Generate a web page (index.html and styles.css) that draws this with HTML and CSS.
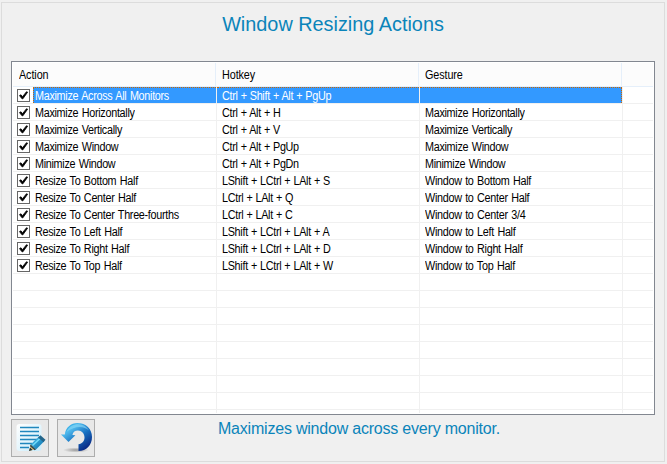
FILE: index.html
```
<!DOCTYPE html>
<html lang="en">
<head>
<meta charset="utf-8">
<title>Window Resizing Actions</title>
<link rel="stylesheet" href="styles.css">
</head>
<body>
<svg width="0" height="0" class="defs"><defs>
<symbol id="check" viewBox="0 0 13 13"><rect x=".5" y=".5" width="12" height="12" fill="#fff" stroke="#666"/><path d="M2.5 6.6 4 5.8 5.5 7.7 9.5 2.7 10.6 3.2 5.9 9.8 5 9.8Z" fill="#000" stroke="#000" stroke-width=".8"/></symbol>
</defs></svg>
<main class="panel">
<h1>Window Resizing Actions</h1>
<section class="list">
<div class="head"><span><b>Action</b></span><span><b>Hotkey</b></span><span><b>Gesture</b></span></div>
<div class="body">
<div class="row selected"><svg><use href="#check"/></svg><span><b>Maximize Across All Monitors</b></span><span><b>Ctrl + Shift + Alt + PgUp</b></span><span></span></div>
<div class="row"><svg><use href="#check"/></svg><span><b>Maximize Horizontally</b></span><span><b>Ctrl + Alt + H</b></span><span><b>Maximize Horizontally</b></span></div>
<div class="row"><svg><use href="#check"/></svg><span><b>Maximize Vertically</b></span><span><b>Ctrl + Alt + V</b></span><span><b>Maximize Vertically</b></span></div>
<div class="row"><svg><use href="#check"/></svg><span><b>Maximize Window</b></span><span><b>Ctrl + Alt + PgUp</b></span><span><b>Maximize Window</b></span></div>
<div class="row"><svg><use href="#check"/></svg><span><b>Minimize Window</b></span><span><b>Ctrl + Alt + PgDn</b></span><span><b>Minimize Window</b></span></div>
<div class="row"><svg><use href="#check"/></svg><span><b>Resize To Bottom Half</b></span><span><b>LShift + LCtrl + LAlt + S</b></span><span><b>Window to Bottom Half</b></span></div>
<div class="row"><svg><use href="#check"/></svg><span><b>Resize To Center Half</b></span><span><b>LCtrl + LAlt + Q</b></span><span><b>Window to Center Half</b></span></div>
<div class="row"><svg><use href="#check"/></svg><span><b>Resize To Center Three-fourths</b></span><span><b>LCtrl + LAlt + C</b></span><span><b>Window to Center 3/4</b></span></div>
<div class="row"><svg><use href="#check"/></svg><span><b>Resize To Left Half</b></span><span><b>LShift + LCtrl + LAlt + A</b></span><span><b>Window to Left Half</b></span></div>
<div class="row"><svg><use href="#check"/></svg><span><b>Resize To Right Half</b></span><span><b>LShift + LCtrl + LAlt + D</b></span><span><b>Window to Right Half</b></span></div>
<div class="row"><svg><use href="#check"/></svg><span><b>Resize To Top Half</b></span><span><b>LShift + LCtrl + LAlt + W</b></span><span><b>Window to Top Half</b></span></div>
</div>
</section>
<footer>
<button aria-label="Edit"><svg width="36" height="36" viewBox="0 0 36 36">
<defs><linearGradient id="pen" x1="0" y1="0" x2="1" y2="1"><stop offset="0" stop-color="#4cc4ee"/><stop offset="1" stop-color="#086aa8"/></linearGradient><linearGradient id="sheet" x1="0" y1="0" x2="1" y2="1"><stop offset="0" stop-color="#fff"/><stop offset="1" stop-color="#c9ecfb"/></linearGradient></defs>
<rect x="4.5" y="4" width="25" height="27" rx="3" fill="url(#sheet)"/>
<path d="M8 7.5h19M8 11.5h19M8 15.5h19M8 19.5h17M8 23.5h12M8 27.5h9" stroke="#2087bd" stroke-width="1.4"/>
<path d="m17 31 2-7 5 5z" fill="#e9bd73"/><path d="m17 31 1-3.5 2.5 2.5z" fill="#17313d"/>
<path d="m18.5 24.5 8-7.5 5.5 4.5-8 8z" fill="url(#pen)"/><path d="m20.5 25.5 7.5-7" stroke="#75dcfa" stroke-width="1.5"/>
<path d="m26 17.5 2.4-2.2 5.1 4.5-2 2.5z" fill="#23658a"/><path d="m18.5 24.5 5.5 5-1.3.7-4.7-4z" fill="#294756"/>
</svg></button>
<button aria-label="Undo"><svg width="36" height="36" viewBox="0 0 36 36">
<defs><linearGradient id="arc" x1="0" y1="0" x2=".8" y2="1"><stop offset="0" stop-color="#0699dc"/><stop offset=".3" stop-color="#4fb9ec"/><stop offset=".6" stop-color="#176fc0"/><stop offset="1" stop-color="#071f7c"/></linearGradient><radialGradient id="shade"><stop offset="0" stop-color="#999"/><stop offset="1" stop-color="#999" stop-opacity="0"/></radialGradient></defs>
<ellipse cx="18" cy="30" rx="13" ry="2.6" fill="url(#shade)"/>
<path d="M3 14.5 6.8 14.6C7.5 7.5 13 3 19.5 3 28 3 34 9 34 17c0 8-5.5 14-13.5 14v-6.8c3.8-.2 6-3 6-6.6 0-4-2.8-7-6.5-7-3 0-5 1.5-5.6 4.4l3 .2-6.9 6.8z" fill="url(#arc)"/>
<path d="M8.5 12C10.5 6.5 15 4.2 20 4.2c5 0 9 2.8 11 6.3-5-4.5-14-5-22.5 1.5z" fill="#8ddbf7" opacity=".6"/>
</svg></button>
<p>Maximizes window across every monitor.</p>
</footer>
</main>
</body>
</html>
```
FILE: styles.css
```
* { box-sizing: border-box; }
body { margin: 0; height: 464px; padding: 2px 2px 2px 1px; overflow: hidden; background: #f0f0f0; font-family: "Liberation Sans", Arial, sans-serif; }
.defs { position: absolute; }
.panel { width: 664px; height: 460px; border: 1px solid #dcdcdc; padding: 0 9px; }
h1 { margin: 0; height: 58px; padding-top: 7px; text-align: center; font-size: 21px; line-height: 28px; font-weight: 400; transform: scaleX(.945); color: #0a84ba; }
.list { width: 644px; height: 354px; border: 1px solid #828790; padding: 1px; background: #fff; font-size: 12px; letter-spacing: -.33px; word-spacing: .9px; color: #000; white-space: nowrap; }
.list b { display: block; width: max-content; font-weight: 400; transform: scaleX(.9); transform-origin: 0 0; }
.head { display: grid; grid-template-columns: 203px 203px 203px 1fr; height: 24px; background: #fcfcfc; border-bottom: 1px solid #e5effa; line-height: 24px; letter-spacing: -.1px; }
.head span { border-right: 1px solid #e5effa; padding-left: 6px; }
.body { height: 326px; background:
  linear-gradient(#f0f0f0, #f0f0f0) 203px 0 / 1px 100% no-repeat,
  linear-gradient(#f0f0f0, #f0f0f0) 406px 0 / 1px 100% no-repeat,
  linear-gradient(#f0f0f0, #f0f0f0) 609px 0 / 1px 100% no-repeat,
  repeating-linear-gradient(transparent 0 16px, #f0f0f0 16px 17px); }
.row { display: grid; grid-template-columns: 20px 183px 203px 203px; height: 17px; line-height: 18px; }
.row svg { width: 13px; height: 13px; margin: 2px 0 0 4px; }
.row span { height: 16px; padding-left: 6px; }
.row span:nth-child(3) { word-spacing: .4px; }
.row svg + span { padding-left: 2px; }
.selected span { color: #fff; background: #3399ff; border-top: 1px dotted #cc6600; line-height: 16px; margin-left: 1px; padding-left: 5px; }
.row.selected span:nth-child(3) { padding-left: 5px; }
.selected svg + span { margin-left: 0; border-left: 1px dotted #cc6600; padding-left: 1px; }
.selected span:last-child { border-right: 1px dotted #cc6600; }
footer { display: flex; gap: 8px; padding-top: 4px; }
button { width: 38px; height: 38px; padding: 0; border: 1px solid #adadad; background: #e8e8e8; }
button svg { display: block; }
footer p { margin: 0 0 0 115px; font-size: 16px; line-height: 20px; letter-spacing: -.21px; color: #0a84ba; }
```
